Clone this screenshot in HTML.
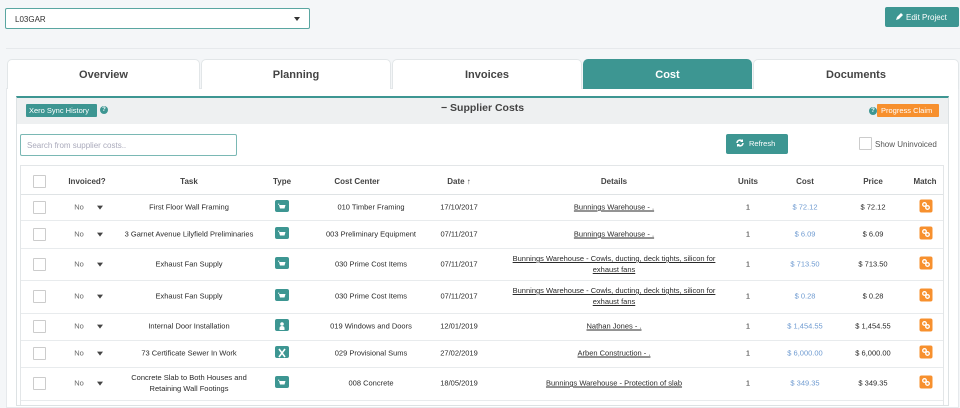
<!DOCTYPE html>
<html><head><meta charset="utf-8"><style>
*{box-sizing:border-box;margin:0;padding:0}
body{width:960px;height:400px;overflow:hidden;background:#f4f6f8;font-family:"Liberation Sans",Arial,sans-serif;position:relative;color:#333}
.a{position:absolute}
.sel{left:5px;top:8px;width:305px;height:21px;border:1px solid #5aa6a1;border-radius:2px;background:#fff;font-size:8px;padding:6px 0 0 9px;color:#333}
.sel:after{content:"";position:absolute;right:9px;top:8px;border:3px solid transparent;border-top:4px solid #333}
.edit{left:885px;top:7px;width:74px;height:20px;background:#3d9692;color:#fff;font-size:8px;border-radius:2px;padding:6px 0 0 21px}
.hr{left:6px;top:48px;width:954px;height:1px;background:#e6e9ec}
.tab{top:59px;height:30px;background:#fff;border:1px solid #e2e6e8;border-bottom:none;border-radius:5px 5px 0 0;text-align:center;font-weight:bold;font-size:11px;color:#444;padding-top:9px}
.cont{left:6px;top:88px;width:953px;height:320px;background:#fff;border:1px solid #e6e9ec}
.panel{left:16px;top:96px;width:933px;height:310px;border:1px solid #dde2e4;border-top:2px solid #3d9692;background:#fff}
.ph{left:17px;top:98px;width:931px;height:26px;background:#eef0f1}
.xero{left:26px;top:104px;width:71px;height:13px;background:#3d9692;color:#fff;font-size:7.5px;padding:2px 0 0 3px;border-radius:1px}
.q{width:8px;height:8px;border-radius:50%;background:#3d9692;color:#fff;font-size:6px;text-align:center;line-height:8px;font-weight:bold}
.pc{left:877px;top:104px;width:62px;height:13px;background:#f7902e;color:#fff;font-size:7.5px;padding:2px 0 0 4px;border-radius:1px}
.search{left:20px;top:134px;width:217px;height:22px;border:1px solid #7ab8b4;border-radius:2px;font-size:8px;color:#aab;padding:6px 0 0 6px}
.ref{left:726px;top:134px;width:62px;height:20px;background:#3d9692;color:#fff;font-size:7.5px;border-radius:2px;padding:5px 0 0 23px}
.cb{width:13px;height:13px;border:1px solid #ccc;background:#fff;border-radius:1px}
.tbl{left:20px;top:165px;width:924px;height:240px;border:1px solid #e3e6e8;border-bottom:none}
.th{top:177px;font-size:8px;font-weight:bold;color:#444;transform:translateX(-50%);white-space:nowrap}
.line{left:21px;width:922px;height:1px;background:#e8ebed}
.c{font-size:7.5px;color:#2a2a2a;transform:translate(-50%,-50%);white-space:nowrap;text-align:center;line-height:11px}
.u{text-decoration:underline}
.blue{color:#6f9bd1}
.ic{width:14px;height:12px;background:#3d9692;border-radius:2px;transform:translate(-50%,-50%)}
.m{width:13px;height:13px;background:#f7902e;border-radius:2px;transform:translate(-50%,-50%)}
.arr{border:3px solid transparent;border-top:4px solid #444;transform:translate(-50%,-20%)}
</style></head><body>
<div class="a sel">L03GAR</div>
<div class="a edit">Edit Project<svg class="a" style="left:10px;top:6px" width="8" height="8" viewBox="0 0 8 8"><path d="M1 7l1-3 4-4 2 2-4 4z" fill="#fff"/></svg></div>
<div class="a hr"></div>
<div class="a cont"></div>
<div class="a tab" style="left:7px;width:193px">Overview</div>
<div class="a tab" style="left:201px;width:190px">Planning</div>
<div class="a tab" style="left:392px;width:190px">Invoices</div>
<div class="a tab" style="left:583px;width:169px;background:#3d9692;color:#fff;border-color:#3d9692">Cost</div>
<div class="a tab" style="left:753px;width:206px">Documents</div>
<div class="a panel"></div>
<div class="a ph"></div>
<div class="a xero">Xero Sync History</div>
<div class="a q" style="left:100px;top:106px">?</div>
<div class="a" style="left:441px;top:102px;font-size:10.5px;font-weight:bold;color:#444">− Supplier Costs</div>
<div class="a q" style="left:869px;top:107px">?</div>
<div class="a pc">Progress Claim</div>
<div class="a search">Search from supplier costs..</div>
<div class="a ref">Refresh<svg class="a" style="left:10px;top:5px" width="8" height="8" viewBox="0 0 8 8"><path d="M1 4a3 3 0 0 1 5.5-1.5M7 4a3 3 0 0 1-5.5 1.5" stroke="#fff" stroke-width="1.5" fill="none"/><path d="M7 0v3H4z M1 8V5h3z" fill="#fff"/></svg></div>
<div class="a cb" style="left:859px;top:137px"></div>
<div class="a" style="left:875px;top:140px;font-size:8px;color:#555">Show Uninvoiced</div>
<div class="a tbl"></div>
<div class="a cb" style="left:33px;top:175px"></div>
<div class="a th" style="left:87px">Invoiced?</div>
<div class="a th" style="left:189px">Task</div>
<div class="a th" style="left:282px">Type</div>
<div class="a th" style="left:357px">Cost Center</div>
<div class="a th" style="left:459px">Date ↑</div>
<div class="a th" style="left:614px">Details</div>
<div class="a th" style="left:748px">Units</div>
<div class="a th" style="left:805px">Cost</div>
<div class="a th" style="left:873px">Price</div>
<div class="a th" style="left:925px">Match</div>
<div class="a line" style="top:194px;height:1px;background:#dfe3e5"></div>

<div id="rows"></div>
<script>
var R=[[207,220,"First Floor Wall Framing","010 Timber Framing","17/10/2017","Bunnings Warehouse - .","$ 72.12","$ 72.12","c"],
[234,248,"3 Garnet Avenue Lilyfield Preliminaries","003 Preliminary Equipment","07/11/2017","Bunnings Warehouse - .","$ 6.09","$ 6.09","c"],
[264,280,"Exhaust Fan Supply","030 Prime Cost Items","07/11/2017","Bunnings Warehouse - Cowls, ducting, deck tights, silicon for<br>exhaust fans","$ 713.50","$ 713.50","c"],
[296,313,"Exhaust Fan Supply","030 Prime Cost Items","07/11/2017","Bunnings Warehouse - Cowls, ducting, deck tights, silicon for<br>exhaust fans","$ 0.28","$ 0.28","c"],
[326,340,"Internal Door Installation","019 Windows and Doors","12/01/2019","Nathan Jones - .","$ 1,454.55","$ 1,454.55","p"],
[353,367,"73 Certificate Sewer In Work","029 Provisional Sums","27/02/2019","Arben Construction - .","$ 6,000.00","$ 6,000.00","x"],
[383,400,"Concrete Slab to Both Houses and<br>Retaining Wall Footings","008 Concrete","18/05/2019","Bunnings Warehouse - Protection of slab","$ 349.35","$ 349.35","c"]];
var h="";
var icons={c:'<svg width="14" height="12" viewBox="0 0 14 12"><path d="M4 4h6.5l-1 3.5H5z" fill="#fff"/><path d="M3 3.2h1.3" stroke="#fff"/></svg>',
p:'<svg width="14" height="12" viewBox="0 0 14 12"><circle cx="7" cy="4" r="1.8" fill="#fff"/><path d="M4.5 10V8a2.5 2 0 0 1 5 0v2z" fill="#fff"/></svg>',
x:'<svg width="14" height="12" viewBox="0 0 14 12"><path d="M4 2l6 8M10 2l-6 8" stroke="#fff" stroke-width="1.6"/></svg>'};
R.forEach(function(r){var y=r[0];
h+='<div class="a cb" style="left:33px;top:'+(y-6)+'px"></div>';
h+='<div class="a c" style="left:79px;top:'+y+'px;color:#666">No</div>';
h+='<div class="a arr" style="left:100px;top:'+y+'px"></div>';
h+='<div class="a c" style="left:189px;top:'+y+'px">'+r[2]+'</div>';
h+='<div class="a ic" style="left:282px;top:'+(y-1)+'px">'+icons[r[8]]+'</div>';
h+='<div class="a c" style="left:371px;top:'+y+'px">'+r[3]+'</div>';
h+='<div class="a c" style="left:459px;top:'+y+'px">'+r[4]+'</div>';
h+='<div class="a c u" style="left:614px;top:'+y+'px">'+r[5]+'</div>';
h+='<div class="a c" style="left:748px;top:'+y+'px">1</div>';
h+='<div class="a c blue" style="left:805px;top:'+y+'px">'+r[6]+'</div>';
h+='<div class="a c" style="left:873px;top:'+y+'px">'+r[7]+'</div>';
h+='<div class="a m" style="left:926px;top:'+(y-1)+'px"><svg width="13" height="13" viewBox="0 0 13 13"><circle cx="5" cy="5" r="1.8" stroke="#fff" fill="none" stroke-width="1.3"/><circle cx="8" cy="8" r="1.8" stroke="#fff" fill="none" stroke-width="1.3"/></svg></div>';
h+='<div class="a line" style="top:'+r[1]+'px"></div>';});
document.getElementById("rows").innerHTML=h;
</script>
</body></html>
